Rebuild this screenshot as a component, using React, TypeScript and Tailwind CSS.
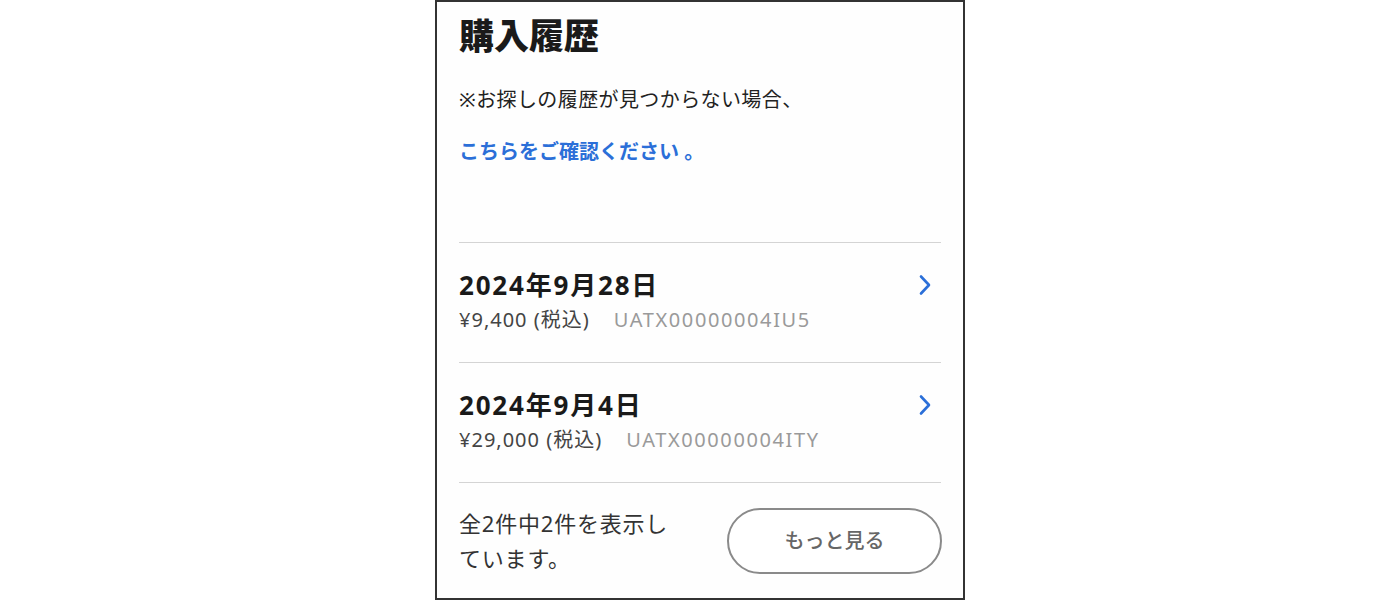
const font = { fontFamily: '"Noto Sans", "Noto Sans CJK JP", sans-serif' };

const ChevronRight = () => (
  <svg width="16" height="24" viewBox="0 0 16 24" fill="none" className="shrink-0">
    <path d="M4 3.5 L12 12 L4 20.5" stroke="#2b6fd8" strokeWidth="2.6" strokeLinecap="round" strokeLinejoin="round" />
  </svg>
);

type Order = { date: string; price: string; id: string };

const orders: Order[] = [
  { date: '2024年9月28日', price: '¥9,400 (税込)', id: 'UATX00000004IU5' },
  { date: '2024年9月4日', price: '¥29,000 (税込)', id: 'UATX00000004ITY' },
];

const OrderRow = ({ order }: { order: Order }) => (
  <div className="flex items-center justify-between border-b border-[#d4d4d4] h-[120px] pr-[8px]">
    <div className="flex flex-col -mt-[3px]">
      <div className="text-[26px] leading-[34px] font-bold tracking-[1.8px] text-[#1a1a1a]">{order.date}</div>
      <div className="flex gap-[24px] text-[20px] leading-[30px] mt-[3px]">
        <span className="text-[#444] tracking-[1px]">{order.price}</span>
        <span className="text-[#9a9a9a] tracking-[1.6px]">{order.id}</span>
      </div>
    </div>
    <div className="mb-[36px]">
      <ChevronRight />
    </div>
  </div>
);

export default function App() {
  return (
    <div className="w-full h-[600px] bg-white flex justify-center" style={font}>
      <div className="w-[530px] h-[600px] border-2 border-[#333] bg-[#fefefe] px-[22px] overflow-hidden">
        <h1 className="text-[35px] leading-[44px] font-black text-[#1a1a1a] mt-[12px]">購入履歴</h1>
        <p className="text-[20px] leading-[30px] tracking-[0.02em] text-[#222] mt-[27px]">※お探しの履歴が見つからない場合、</p>
        <a className="block text-[20px] leading-[30px] font-bold text-[#2b6fd8] mt-[22px]">こちらをご確認ください 。</a>
        <div className="mt-[75px] border-t border-[#d4d4d4]">
          {orders.map((o) => (
            <OrderRow key={o.id} order={o} />
          ))}
        </div>
        <div className="flex items-center justify-between pt-[23px]">
          <p className="text-[22px] leading-[35px] tracking-[0.8px] text-[#333] w-[222px]">全2件中2件を表示しています。</p>
          <button className="w-[215px] h-[66px] rounded-full border-2 border-[#8a8a8a] text-[20px] font-medium text-[#666] bg-white -mr-[1px]">
            もっと見る
          </button>
        </div>
      </div>
    </div>
  );
}
